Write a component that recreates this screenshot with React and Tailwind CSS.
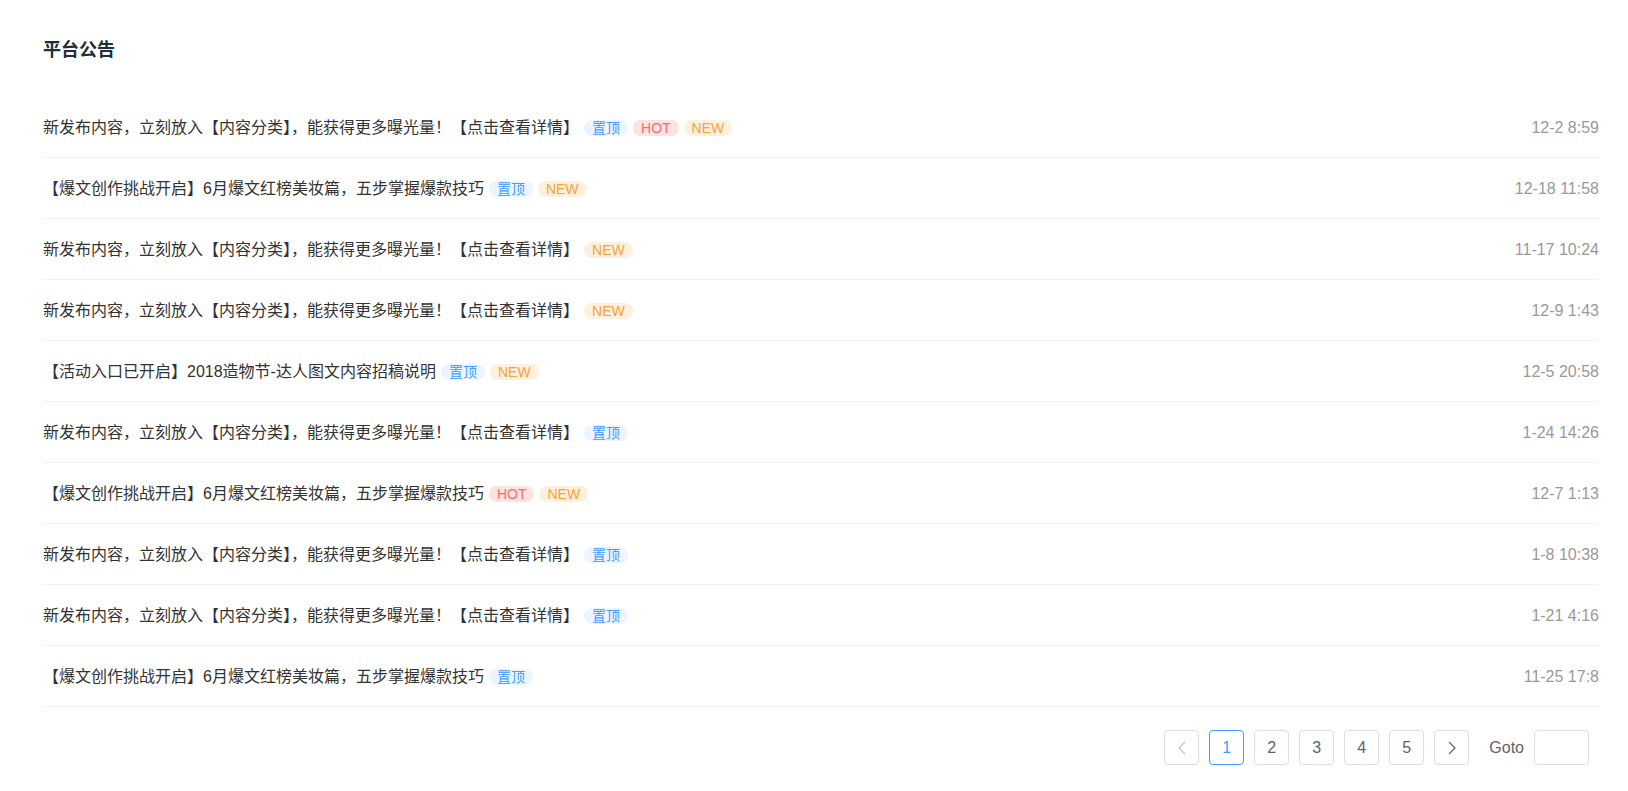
import React, { useState } from "react";

const notices = [
  { title: "新发布内容，立刻放入【内容分类】，能获得更多曝光量！【点击查看详情】", tags: ["top", "hot", "new"], time: "12-2 8:59" },
  { title: "【爆文创作挑战开启】6月爆文红榜美妆篇，五步掌握爆款技巧", tags: ["top", "new"], time: "12-18 11:58" },
  { title: "新发布内容，立刻放入【内容分类】，能获得更多曝光量！【点击查看详情】", tags: ["new"], time: "11-17 10:24" },
  { title: "新发布内容，立刻放入【内容分类】，能获得更多曝光量！【点击查看详情】", tags: ["new"], time: "12-9 1:43" },
  { title: "【活动入口已开启】2018造物节-达人图文内容招稿说明", tags: ["top", "new"], time: "12-5 20:58" },
  { title: "新发布内容，立刻放入【内容分类】，能获得更多曝光量！【点击查看详情】", tags: ["top"], time: "1-24 14:26" },
  { title: "【爆文创作挑战开启】6月爆文红榜美妆篇，五步掌握爆款技巧", tags: ["hot", "new"], time: "12-7 1:13" },
  { title: "新发布内容，立刻放入【内容分类】，能获得更多曝光量！【点击查看详情】", tags: ["top"], time: "1-8 10:38" },
  { title: "新发布内容，立刻放入【内容分类】，能获得更多曝光量！【点击查看详情】", tags: ["top"], time: "1-21 4:16" },
  { title: "【爆文创作挑战开启】6月爆文红榜美妆篇，五步掌握爆款技巧", tags: ["top"], time: "11-25 17:8" },
];

// ----- tag styles -----
const tagStyle = {
  top: { label: "置顶", cls: "bg-[#ecf5ff] text-[#409eff]" },
  hot: { label: "HOT", cls: "bg-[#fde2e2] text-[#f56c6c]" },
  new: { label: "NEW", cls: "bg-[#fdf0dc] text-[#f5a33a]" },
};

function Tag({ type }) {
  const t = tagStyle[type];
  return (
    <span className={`inline-flex items-center h-[16px] px-[8px] rounded-full text-[14px] leading-[16px] ${t.cls}`}>
      {t.label}
    </span>
  );
}

function PageBtn({ children, active, onClick }) {
  return (
    <button
      onClick={onClick}
      className={`w-[35px] h-[35px] flex items-center justify-center rounded-[4px] border bg-white text-[16px] ${
        active ? "border-[#409eff] text-[#409eff]" : "border-[#dcdfe6] text-[#606266]"
      }`}
    >
      {children}
    </button>
  );
}

export default function App() {
  const [page, setPage] = useState(1);

  return (
    <div
      className="w-[1628px] h-[791px] bg-white pl-[43px] pr-[29px] pt-[38px]"
      style={{ fontFamily: '"Liberation Sans", "Noto Sans CJK SC", sans-serif' }}
    >
      {/* title */}
      <h2 className="text-[18px] leading-[24px] font-bold text-[#1f2d3d]">平台公告</h2>

      {/* list */}
      <div className="mt-[35px]">
        {notices.map((n, i) => (
          <div key={i} className="h-[61px] flex items-center justify-between border-b border-[#f2f2f2]">
            <div className="flex items-center pt-[2px]">
              <span className="text-[16px] leading-[20px] text-[#333]">{n.title}</span>
              <div className="flex items-center gap-[5px] ml-[5px]">
                {n.tags.map((t) => (
                  <Tag key={t} type={t} />
                ))}
              </div>
            </div>
            <span className="pt-[2px] text-[16px] leading-[20px] text-[#999]">{n.time}</span>
          </div>
        ))}
      </div>

      {/* pagination */}
      <div className="flex items-center justify-end gap-[10px] mt-[23px] pr-[10px]">
        <PageBtn>
          <svg width="10" height="14" viewBox="0 0 10 14" fill="none">
            <polyline points="8,1 2,7 8,13" stroke="#c0c4cc" strokeWidth="1.2" />
          </svg>
        </PageBtn>
        {[1, 2, 3, 4, 5].map((p) => (
          <PageBtn key={p} active={page === p} onClick={() => setPage(p)}>
            {p}
          </PageBtn>
        ))}
        <PageBtn>
          <svg width="10" height="14" viewBox="0 0 10 14" fill="none">
            <polyline points="2,1 8,7 2,13" stroke="#606266" strokeWidth="1.2" />
          </svg>
        </PageBtn>
        <span className="ml-[10px] text-[16px] text-[#606266]">Goto</span>
        <input className="w-[55px] h-[35px] rounded-[4px] border border-[#dcdfe6] outline-none px-2 text-[16px]" />
      </div>
    </div>
  );
}
